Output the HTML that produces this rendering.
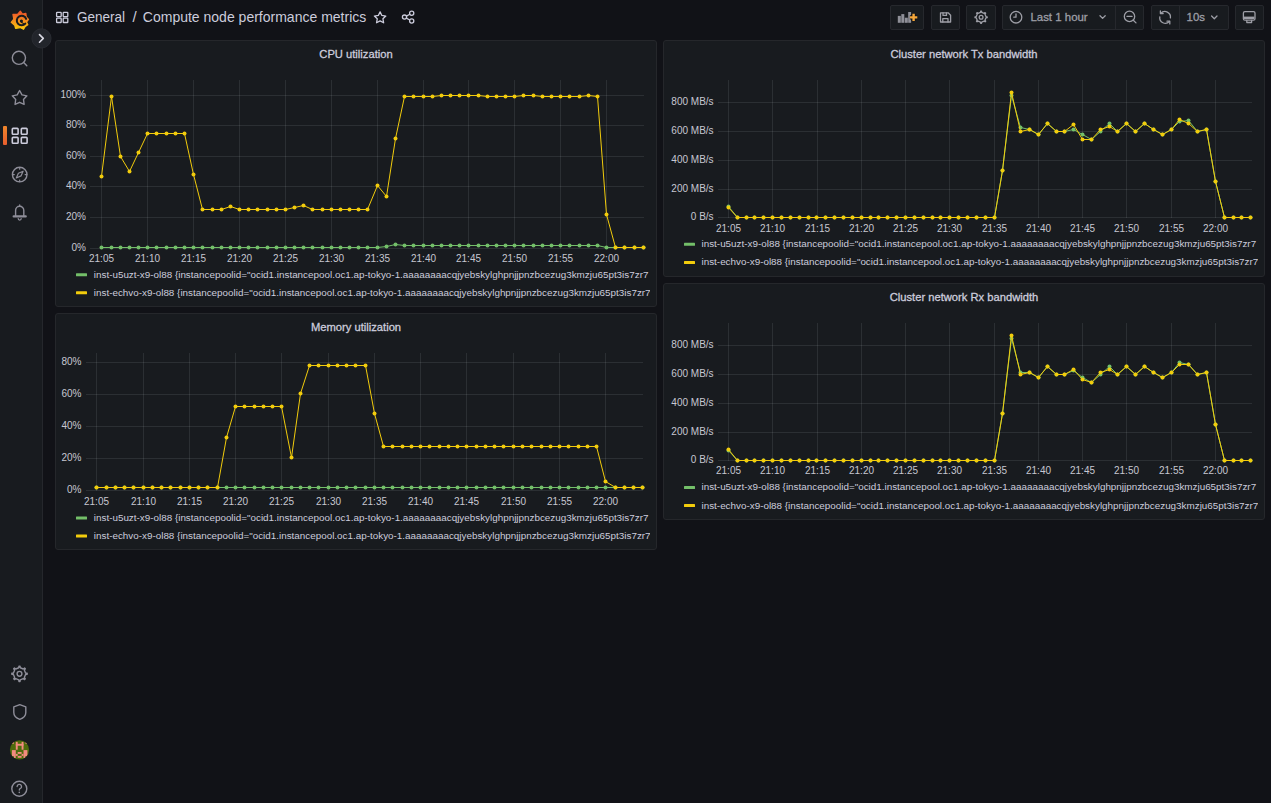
<!DOCTYPE html>
<html><head><meta charset="utf-8"><title>Compute node performance metrics - Grafana</title>
<style>
html,body{margin:0;padding:0;}
body{width:1271px;height:803px;overflow:hidden;background:#111217;position:relative;font-family:"Liberation Sans", sans-serif;color:#ccccdc;}
.side{position:absolute;left:0;top:0;width:42px;height:803px;background:#181b1f;border-right:1px solid #25272c;}
.panel{position:absolute;box-sizing:border-box;background:#181b1f;border:1px solid #25272b;border-radius:3px;}
.ov{position:absolute;left:0;top:0;}
.btn{position:absolute;top:5px;height:25px;box-sizing:border-box;background:#181b1f;border:1px solid #26282d;border-radius:2px;}
.tt{position:absolute;font-size:14px;color:#ccccdc;white-space:pre;line-height:1;}
</style></head><body>
<div class="side"></div>
<div class="panel" style="left:55px;top:40px;width:602px;height:267px"></div>
<div class="panel" style="left:55px;top:313px;width:602px;height:237px"></div>
<div class="panel" style="left:663px;top:40px;width:602px;height:237px"></div>
<div class="panel" style="left:663px;top:283px;width:602px;height:237px"></div>
<div class="btn" style="left:890px;width:34px"></div>
<div class="btn" style="left:931px;width:29px"></div>
<div class="btn" style="left:966px;width:30px"></div>
<div class="btn" style="left:1002px;width:142px"></div>
<div class="btn" style="left:1151px;width:78px"></div>
<div class="btn" style="left:1235px;width:29px"></div>
<svg class="ov" width="1271" height="803" viewBox="0 0 1271 803" style="font-family:"Liberation Sans", sans-serif"><defs>
<clipPath id="clipL1"><rect x="56" y="260" width="594" height="45"/></clipPath>
<clipPath id="clipL2"><rect x="56" y="505" width="594" height="45"/></clipPath>
<clipPath id="clipR1"><rect x="664" y="230" width="594" height="45"/></clipPath>
<clipPath id="clipR2"><rect x="664" y="473" width="594" height="45"/></clipPath>
</defs><rect x="90" y="248" width="554" height="1" fill="rgba(240,250,255,0.09)"/><text x="86.00" y="251.10" font-size="10" text-anchor="end" fill="#c7c7d1" font-weight="400" >0%</text><rect x="90" y="217" width="554" height="1" fill="rgba(240,250,255,0.09)"/><text x="86.00" y="220.10" font-size="10" text-anchor="end" fill="#c7c7d1" font-weight="400" >20%</text><rect x="90" y="186" width="554" height="1" fill="rgba(240,250,255,0.09)"/><text x="86.00" y="189.10" font-size="10" text-anchor="end" fill="#c7c7d1" font-weight="400" >40%</text><rect x="90" y="156" width="554" height="1" fill="rgba(240,250,255,0.09)"/><text x="86.00" y="159.10" font-size="10" text-anchor="end" fill="#c7c7d1" font-weight="400" >60%</text><rect x="90" y="125" width="554" height="1" fill="rgba(240,250,255,0.09)"/><text x="86.00" y="128.10" font-size="10" text-anchor="end" fill="#c7c7d1" font-weight="400" >80%</text><rect x="90" y="95" width="554" height="1" fill="rgba(240,250,255,0.09)"/><text x="86.00" y="98.10" font-size="10" text-anchor="end" fill="#c7c7d1" font-weight="400" >100%</text><rect x="101" y="80" width="1" height="169" fill="rgba(240,250,255,0.09)"/><text x="101.50" y="261.70" font-size="10" text-anchor="middle" fill="#c7c7d1" font-weight="400" >21:05</text><rect x="147" y="80" width="1" height="169" fill="rgba(240,250,255,0.09)"/><text x="147.50" y="261.70" font-size="10" text-anchor="middle" fill="#c7c7d1" font-weight="400" >21:10</text><rect x="193" y="80" width="1" height="169" fill="rgba(240,250,255,0.09)"/><text x="193.50" y="261.70" font-size="10" text-anchor="middle" fill="#c7c7d1" font-weight="400" >21:15</text><rect x="239" y="80" width="1" height="169" fill="rgba(240,250,255,0.09)"/><text x="239.50" y="261.70" font-size="10" text-anchor="middle" fill="#c7c7d1" font-weight="400" >21:20</text><rect x="285" y="80" width="1" height="169" fill="rgba(240,250,255,0.09)"/><text x="285.50" y="261.70" font-size="10" text-anchor="middle" fill="#c7c7d1" font-weight="400" >21:25</text><rect x="331" y="80" width="1" height="169" fill="rgba(240,250,255,0.09)"/><text x="331.50" y="261.70" font-size="10" text-anchor="middle" fill="#c7c7d1" font-weight="400" >21:30</text><rect x="377" y="80" width="1" height="169" fill="rgba(240,250,255,0.09)"/><text x="377.50" y="261.70" font-size="10" text-anchor="middle" fill="#c7c7d1" font-weight="400" >21:35</text><rect x="423" y="80" width="1" height="169" fill="rgba(240,250,255,0.09)"/><text x="423.50" y="261.70" font-size="10" text-anchor="middle" fill="#c7c7d1" font-weight="400" >21:40</text><rect x="468" y="80" width="1" height="169" fill="rgba(240,250,255,0.09)"/><text x="468.50" y="261.70" font-size="10" text-anchor="middle" fill="#c7c7d1" font-weight="400" >21:45</text><rect x="514" y="80" width="1" height="169" fill="rgba(240,250,255,0.09)"/><text x="514.50" y="261.70" font-size="10" text-anchor="middle" fill="#c7c7d1" font-weight="400" >21:50</text><rect x="560" y="80" width="1" height="169" fill="rgba(240,250,255,0.09)"/><text x="560.50" y="261.70" font-size="10" text-anchor="middle" fill="#c7c7d1" font-weight="400" >21:55</text><rect x="606" y="80" width="1" height="169" fill="rgba(240,250,255,0.09)"/><text x="606.50" y="261.70" font-size="10" text-anchor="middle" fill="#c7c7d1" font-weight="400" >22:00</text><path d="M101.5,247.5 L111.5,247.5 L120.5,247.5 L129.5,247.5 L138.5,247.5 L147.5,247.5 L156.5,247.5 L166.5,247.5 L175.5,247.5 L184.5,247.5 L193.5,247.5 L202.5,247.5 L212.5,247.5 L221.5,247.5 L230.5,247.5 L239.5,247.5 L248.5,247.5 L257.5,247.5 L267.5,247.5 L276.5,247.5 L285.5,247.5 L294.5,247.5 L303.5,247.5 L312.5,247.5 L322.5,247.5 L331.5,247.5 L340.5,247.5 L349.5,247.5 L358.5,247.5 L367.5,247.5 L377.5,247.5 L386.5,246.5 L395.5,244.5 L404.5,245.5 L413.5,245.5 L423.5,245.5 L432.5,245.5 L441.5,245.5 L450.5,245.5 L459.5,245.5 L468.5,245.5 L478.5,245.5 L487.5,245.5 L496.5,245.5 L505.5,245.5 L514.5,245.5 L523.5,245.5 L533.5,245.5 L542.5,245.5 L551.5,245.5 L560.5,245.5 L569.5,245.5 L579.5,245.5 L588.5,245.5 L597.5,245.5 L606.5,247.5 L615.5,247.5 L624.5,247.5 L634.5,247.5 L643.5,247.5" fill="none" stroke="#73bf69" stroke-width="1" stroke-linejoin="round"/><circle cx="101.5" cy="247.5" r="2.0" fill="#73bf69"/><circle cx="111.5" cy="247.5" r="2.0" fill="#73bf69"/><circle cx="120.5" cy="247.5" r="2.0" fill="#73bf69"/><circle cx="129.5" cy="247.5" r="2.0" fill="#73bf69"/><circle cx="138.5" cy="247.5" r="2.0" fill="#73bf69"/><circle cx="147.5" cy="247.5" r="2.0" fill="#73bf69"/><circle cx="156.5" cy="247.5" r="2.0" fill="#73bf69"/><circle cx="166.5" cy="247.5" r="2.0" fill="#73bf69"/><circle cx="175.5" cy="247.5" r="2.0" fill="#73bf69"/><circle cx="184.5" cy="247.5" r="2.0" fill="#73bf69"/><circle cx="193.5" cy="247.5" r="2.0" fill="#73bf69"/><circle cx="202.5" cy="247.5" r="2.0" fill="#73bf69"/><circle cx="212.5" cy="247.5" r="2.0" fill="#73bf69"/><circle cx="221.5" cy="247.5" r="2.0" fill="#73bf69"/><circle cx="230.5" cy="247.5" r="2.0" fill="#73bf69"/><circle cx="239.5" cy="247.5" r="2.0" fill="#73bf69"/><circle cx="248.5" cy="247.5" r="2.0" fill="#73bf69"/><circle cx="257.5" cy="247.5" r="2.0" fill="#73bf69"/><circle cx="267.5" cy="247.5" r="2.0" fill="#73bf69"/><circle cx="276.5" cy="247.5" r="2.0" fill="#73bf69"/><circle cx="285.5" cy="247.5" r="2.0" fill="#73bf69"/><circle cx="294.5" cy="247.5" r="2.0" fill="#73bf69"/><circle cx="303.5" cy="247.5" r="2.0" fill="#73bf69"/><circle cx="312.5" cy="247.5" r="2.0" fill="#73bf69"/><circle cx="322.5" cy="247.5" r="2.0" fill="#73bf69"/><circle cx="331.5" cy="247.5" r="2.0" fill="#73bf69"/><circle cx="340.5" cy="247.5" r="2.0" fill="#73bf69"/><circle cx="349.5" cy="247.5" r="2.0" fill="#73bf69"/><circle cx="358.5" cy="247.5" r="2.0" fill="#73bf69"/><circle cx="367.5" cy="247.5" r="2.0" fill="#73bf69"/><circle cx="377.5" cy="247.5" r="2.0" fill="#73bf69"/><circle cx="386.5" cy="246.5" r="2.0" fill="#73bf69"/><circle cx="395.5" cy="244.5" r="2.0" fill="#73bf69"/><circle cx="404.5" cy="245.5" r="2.0" fill="#73bf69"/><circle cx="413.5" cy="245.5" r="2.0" fill="#73bf69"/><circle cx="423.5" cy="245.5" r="2.0" fill="#73bf69"/><circle cx="432.5" cy="245.5" r="2.0" fill="#73bf69"/><circle cx="441.5" cy="245.5" r="2.0" fill="#73bf69"/><circle cx="450.5" cy="245.5" r="2.0" fill="#73bf69"/><circle cx="459.5" cy="245.5" r="2.0" fill="#73bf69"/><circle cx="468.5" cy="245.5" r="2.0" fill="#73bf69"/><circle cx="478.5" cy="245.5" r="2.0" fill="#73bf69"/><circle cx="487.5" cy="245.5" r="2.0" fill="#73bf69"/><circle cx="496.5" cy="245.5" r="2.0" fill="#73bf69"/><circle cx="505.5" cy="245.5" r="2.0" fill="#73bf69"/><circle cx="514.5" cy="245.5" r="2.0" fill="#73bf69"/><circle cx="523.5" cy="245.5" r="2.0" fill="#73bf69"/><circle cx="533.5" cy="245.5" r="2.0" fill="#73bf69"/><circle cx="542.5" cy="245.5" r="2.0" fill="#73bf69"/><circle cx="551.5" cy="245.5" r="2.0" fill="#73bf69"/><circle cx="560.5" cy="245.5" r="2.0" fill="#73bf69"/><circle cx="569.5" cy="245.5" r="2.0" fill="#73bf69"/><circle cx="579.5" cy="245.5" r="2.0" fill="#73bf69"/><circle cx="588.5" cy="245.5" r="2.0" fill="#73bf69"/><circle cx="597.5" cy="245.5" r="2.0" fill="#73bf69"/><circle cx="606.5" cy="247.5" r="2.0" fill="#73bf69"/><circle cx="615.5" cy="247.5" r="2.0" fill="#73bf69"/><circle cx="624.5" cy="247.5" r="2.0" fill="#73bf69"/><circle cx="634.5" cy="247.5" r="2.0" fill="#73bf69"/><circle cx="643.5" cy="247.5" r="2.0" fill="#73bf69"/><path d="M101.5,176.5 L111.5,96.5 L120.5,156.5 L129.5,171.5 L138.5,152.5 L147.5,133.5 L156.5,133.5 L166.5,133.5 L175.5,133.5 L184.5,133.5 L193.5,174.5 L202.5,209.5 L212.5,209.5 L221.5,209.5 L230.5,206.5 L239.5,209.5 L248.5,209.5 L257.5,209.5 L267.5,209.5 L276.5,209.5 L285.5,209.5 L294.5,207.5 L303.5,205.5 L312.5,209.5 L322.5,209.5 L331.5,209.5 L340.5,209.5 L349.5,209.5 L358.5,209.5 L367.5,209.5 L377.5,185.5 L386.5,196.5 L395.5,138.5 L404.5,96.5 L413.5,96.5 L423.5,96.5 L432.5,96.5 L441.5,95.5 L450.5,95.5 L459.5,95.5 L468.5,95.5 L478.5,95.5 L487.5,96.5 L496.5,96.5 L505.5,96.5 L514.5,96.5 L523.5,95.5 L533.5,95.5 L542.5,96.5 L551.5,96.5 L560.5,96.5 L569.5,96.5 L579.5,96.5 L588.5,95.5 L597.5,96.5 L606.5,214.5 L615.5,247.5 L624.5,247.5 L634.5,247.5 L643.5,247.5" fill="none" stroke="#f2cc0c" stroke-width="1" stroke-linejoin="round"/><circle cx="101.5" cy="176.5" r="2.0" fill="#f2cc0c"/><circle cx="111.5" cy="96.5" r="2.0" fill="#f2cc0c"/><circle cx="120.5" cy="156.5" r="2.0" fill="#f2cc0c"/><circle cx="129.5" cy="171.5" r="2.0" fill="#f2cc0c"/><circle cx="138.5" cy="152.5" r="2.0" fill="#f2cc0c"/><circle cx="147.5" cy="133.5" r="2.0" fill="#f2cc0c"/><circle cx="156.5" cy="133.5" r="2.0" fill="#f2cc0c"/><circle cx="166.5" cy="133.5" r="2.0" fill="#f2cc0c"/><circle cx="175.5" cy="133.5" r="2.0" fill="#f2cc0c"/><circle cx="184.5" cy="133.5" r="2.0" fill="#f2cc0c"/><circle cx="193.5" cy="174.5" r="2.0" fill="#f2cc0c"/><circle cx="202.5" cy="209.5" r="2.0" fill="#f2cc0c"/><circle cx="212.5" cy="209.5" r="2.0" fill="#f2cc0c"/><circle cx="221.5" cy="209.5" r="2.0" fill="#f2cc0c"/><circle cx="230.5" cy="206.5" r="2.0" fill="#f2cc0c"/><circle cx="239.5" cy="209.5" r="2.0" fill="#f2cc0c"/><circle cx="248.5" cy="209.5" r="2.0" fill="#f2cc0c"/><circle cx="257.5" cy="209.5" r="2.0" fill="#f2cc0c"/><circle cx="267.5" cy="209.5" r="2.0" fill="#f2cc0c"/><circle cx="276.5" cy="209.5" r="2.0" fill="#f2cc0c"/><circle cx="285.5" cy="209.5" r="2.0" fill="#f2cc0c"/><circle cx="294.5" cy="207.5" r="2.0" fill="#f2cc0c"/><circle cx="303.5" cy="205.5" r="2.0" fill="#f2cc0c"/><circle cx="312.5" cy="209.5" r="2.0" fill="#f2cc0c"/><circle cx="322.5" cy="209.5" r="2.0" fill="#f2cc0c"/><circle cx="331.5" cy="209.5" r="2.0" fill="#f2cc0c"/><circle cx="340.5" cy="209.5" r="2.0" fill="#f2cc0c"/><circle cx="349.5" cy="209.5" r="2.0" fill="#f2cc0c"/><circle cx="358.5" cy="209.5" r="2.0" fill="#f2cc0c"/><circle cx="367.5" cy="209.5" r="2.0" fill="#f2cc0c"/><circle cx="377.5" cy="185.5" r="2.0" fill="#f2cc0c"/><circle cx="386.5" cy="196.5" r="2.0" fill="#f2cc0c"/><circle cx="395.5" cy="138.5" r="2.0" fill="#f2cc0c"/><circle cx="404.5" cy="96.5" r="2.0" fill="#f2cc0c"/><circle cx="413.5" cy="96.5" r="2.0" fill="#f2cc0c"/><circle cx="423.5" cy="96.5" r="2.0" fill="#f2cc0c"/><circle cx="432.5" cy="96.5" r="2.0" fill="#f2cc0c"/><circle cx="441.5" cy="95.5" r="2.0" fill="#f2cc0c"/><circle cx="450.5" cy="95.5" r="2.0" fill="#f2cc0c"/><circle cx="459.5" cy="95.5" r="2.0" fill="#f2cc0c"/><circle cx="468.5" cy="95.5" r="2.0" fill="#f2cc0c"/><circle cx="478.5" cy="95.5" r="2.0" fill="#f2cc0c"/><circle cx="487.5" cy="96.5" r="2.0" fill="#f2cc0c"/><circle cx="496.5" cy="96.5" r="2.0" fill="#f2cc0c"/><circle cx="505.5" cy="96.5" r="2.0" fill="#f2cc0c"/><circle cx="514.5" cy="96.5" r="2.0" fill="#f2cc0c"/><circle cx="523.5" cy="95.5" r="2.0" fill="#f2cc0c"/><circle cx="533.5" cy="95.5" r="2.0" fill="#f2cc0c"/><circle cx="542.5" cy="96.5" r="2.0" fill="#f2cc0c"/><circle cx="551.5" cy="96.5" r="2.0" fill="#f2cc0c"/><circle cx="560.5" cy="96.5" r="2.0" fill="#f2cc0c"/><circle cx="569.5" cy="96.5" r="2.0" fill="#f2cc0c"/><circle cx="579.5" cy="96.5" r="2.0" fill="#f2cc0c"/><circle cx="588.5" cy="95.5" r="2.0" fill="#f2cc0c"/><circle cx="597.5" cy="96.5" r="2.0" fill="#f2cc0c"/><circle cx="606.5" cy="214.5" r="2.0" fill="#f2cc0c"/><circle cx="615.5" cy="247.5" r="2.0" fill="#f2cc0c"/><circle cx="624.5" cy="247.5" r="2.0" fill="#f2cc0c"/><circle cx="634.5" cy="247.5" r="2.0" fill="#f2cc0c"/><circle cx="643.5" cy="247.5" r="2.0" fill="#f2cc0c"/><rect x="86" y="490" width="557" height="1" fill="rgba(240,250,255,0.09)"/><text x="81.50" y="493.10" font-size="10" text-anchor="end" fill="#c7c7d1" font-weight="400" >0%</text><rect x="86" y="458" width="557" height="1" fill="rgba(240,250,255,0.09)"/><text x="81.50" y="461.10" font-size="10" text-anchor="end" fill="#c7c7d1" font-weight="400" >20%</text><rect x="86" y="426" width="557" height="1" fill="rgba(240,250,255,0.09)"/><text x="81.50" y="429.10" font-size="10" text-anchor="end" fill="#c7c7d1" font-weight="400" >40%</text><rect x="86" y="394" width="557" height="1" fill="rgba(240,250,255,0.09)"/><text x="81.50" y="397.10" font-size="10" text-anchor="end" fill="#c7c7d1" font-weight="400" >60%</text><rect x="86" y="362" width="557" height="1" fill="rgba(240,250,255,0.09)"/><text x="81.50" y="365.10" font-size="10" text-anchor="end" fill="#c7c7d1" font-weight="400" >80%</text><rect x="96" y="353" width="1" height="138" fill="rgba(240,250,255,0.09)"/><text x="96.50" y="505.00" font-size="10" text-anchor="middle" fill="#c7c7d1" font-weight="400" >21:05</text><rect x="143" y="353" width="1" height="138" fill="rgba(240,250,255,0.09)"/><text x="143.50" y="505.00" font-size="10" text-anchor="middle" fill="#c7c7d1" font-weight="400" >21:10</text><rect x="189" y="353" width="1" height="138" fill="rgba(240,250,255,0.09)"/><text x="189.50" y="505.00" font-size="10" text-anchor="middle" fill="#c7c7d1" font-weight="400" >21:15</text><rect x="235" y="353" width="1" height="138" fill="rgba(240,250,255,0.09)"/><text x="235.50" y="505.00" font-size="10" text-anchor="middle" fill="#c7c7d1" font-weight="400" >21:20</text><rect x="281" y="353" width="1" height="138" fill="rgba(240,250,255,0.09)"/><text x="281.50" y="505.00" font-size="10" text-anchor="middle" fill="#c7c7d1" font-weight="400" >21:25</text><rect x="328" y="353" width="1" height="138" fill="rgba(240,250,255,0.09)"/><text x="328.50" y="505.00" font-size="10" text-anchor="middle" fill="#c7c7d1" font-weight="400" >21:30</text><rect x="374" y="353" width="1" height="138" fill="rgba(240,250,255,0.09)"/><text x="374.50" y="505.00" font-size="10" text-anchor="middle" fill="#c7c7d1" font-weight="400" >21:35</text><rect x="420" y="353" width="1" height="138" fill="rgba(240,250,255,0.09)"/><text x="420.50" y="505.00" font-size="10" text-anchor="middle" fill="#c7c7d1" font-weight="400" >21:40</text><rect x="466" y="353" width="1" height="138" fill="rgba(240,250,255,0.09)"/><text x="466.50" y="505.00" font-size="10" text-anchor="middle" fill="#c7c7d1" font-weight="400" >21:45</text><rect x="513" y="353" width="1" height="138" fill="rgba(240,250,255,0.09)"/><text x="513.50" y="505.00" font-size="10" text-anchor="middle" fill="#c7c7d1" font-weight="400" >21:50</text><rect x="559" y="353" width="1" height="138" fill="rgba(240,250,255,0.09)"/><text x="559.50" y="505.00" font-size="10" text-anchor="middle" fill="#c7c7d1" font-weight="400" >21:55</text><rect x="605" y="353" width="1" height="138" fill="rgba(240,250,255,0.09)"/><text x="605.50" y="505.00" font-size="10" text-anchor="middle" fill="#c7c7d1" font-weight="400" >22:00</text><path d="M96.5,487.5 L106.5,487.5 L115.5,487.5 L124.5,487.5 L133.5,487.5 L143.5,487.5 L152.5,487.5 L161.5,487.5 L170.5,487.5 L180.5,487.5 L189.5,487.5 L198.5,487.5 L207.5,487.5 L217.5,487.5 L226.5,487.5 L235.5,487.5 L244.5,487.5 L254.5,487.5 L263.5,487.5 L272.5,487.5 L281.5,487.5 L291.5,487.5 L300.5,487.5 L309.5,487.5 L318.5,487.5 L328.5,487.5 L337.5,487.5 L346.5,487.5 L355.5,487.5 L365.5,487.5 L374.5,487.5 L383.5,487.5 L392.5,487.5 L402.5,487.5 L411.5,487.5 L420.5,487.5 L429.5,487.5 L439.5,487.5 L448.5,487.5 L457.5,487.5 L466.5,487.5 L476.5,487.5 L485.5,487.5 L494.5,487.5 L503.5,487.5 L513.5,487.5 L522.5,487.5 L531.5,487.5 L541.5,487.5 L550.5,487.5 L559.5,487.5 L568.5,487.5 L578.5,487.5 L587.5,487.5 L596.5,487.5 L605.5,487.5 L615.5,487.5 L624.5,487.5 L633.5,487.5 L642.5,487.5" fill="none" stroke="#73bf69" stroke-width="1" stroke-linejoin="round"/><circle cx="96.5" cy="487.5" r="2.0" fill="#73bf69"/><circle cx="106.5" cy="487.5" r="2.0" fill="#73bf69"/><circle cx="115.5" cy="487.5" r="2.0" fill="#73bf69"/><circle cx="124.5" cy="487.5" r="2.0" fill="#73bf69"/><circle cx="133.5" cy="487.5" r="2.0" fill="#73bf69"/><circle cx="143.5" cy="487.5" r="2.0" fill="#73bf69"/><circle cx="152.5" cy="487.5" r="2.0" fill="#73bf69"/><circle cx="161.5" cy="487.5" r="2.0" fill="#73bf69"/><circle cx="170.5" cy="487.5" r="2.0" fill="#73bf69"/><circle cx="180.5" cy="487.5" r="2.0" fill="#73bf69"/><circle cx="189.5" cy="487.5" r="2.0" fill="#73bf69"/><circle cx="198.5" cy="487.5" r="2.0" fill="#73bf69"/><circle cx="207.5" cy="487.5" r="2.0" fill="#73bf69"/><circle cx="217.5" cy="487.5" r="2.0" fill="#73bf69"/><circle cx="226.5" cy="487.5" r="2.0" fill="#73bf69"/><circle cx="235.5" cy="487.5" r="2.0" fill="#73bf69"/><circle cx="244.5" cy="487.5" r="2.0" fill="#73bf69"/><circle cx="254.5" cy="487.5" r="2.0" fill="#73bf69"/><circle cx="263.5" cy="487.5" r="2.0" fill="#73bf69"/><circle cx="272.5" cy="487.5" r="2.0" fill="#73bf69"/><circle cx="281.5" cy="487.5" r="2.0" fill="#73bf69"/><circle cx="291.5" cy="487.5" r="2.0" fill="#73bf69"/><circle cx="300.5" cy="487.5" r="2.0" fill="#73bf69"/><circle cx="309.5" cy="487.5" r="2.0" fill="#73bf69"/><circle cx="318.5" cy="487.5" r="2.0" fill="#73bf69"/><circle cx="328.5" cy="487.5" r="2.0" fill="#73bf69"/><circle cx="337.5" cy="487.5" r="2.0" fill="#73bf69"/><circle cx="346.5" cy="487.5" r="2.0" fill="#73bf69"/><circle cx="355.5" cy="487.5" r="2.0" fill="#73bf69"/><circle cx="365.5" cy="487.5" r="2.0" fill="#73bf69"/><circle cx="374.5" cy="487.5" r="2.0" fill="#73bf69"/><circle cx="383.5" cy="487.5" r="2.0" fill="#73bf69"/><circle cx="392.5" cy="487.5" r="2.0" fill="#73bf69"/><circle cx="402.5" cy="487.5" r="2.0" fill="#73bf69"/><circle cx="411.5" cy="487.5" r="2.0" fill="#73bf69"/><circle cx="420.5" cy="487.5" r="2.0" fill="#73bf69"/><circle cx="429.5" cy="487.5" r="2.0" fill="#73bf69"/><circle cx="439.5" cy="487.5" r="2.0" fill="#73bf69"/><circle cx="448.5" cy="487.5" r="2.0" fill="#73bf69"/><circle cx="457.5" cy="487.5" r="2.0" fill="#73bf69"/><circle cx="466.5" cy="487.5" r="2.0" fill="#73bf69"/><circle cx="476.5" cy="487.5" r="2.0" fill="#73bf69"/><circle cx="485.5" cy="487.5" r="2.0" fill="#73bf69"/><circle cx="494.5" cy="487.5" r="2.0" fill="#73bf69"/><circle cx="503.5" cy="487.5" r="2.0" fill="#73bf69"/><circle cx="513.5" cy="487.5" r="2.0" fill="#73bf69"/><circle cx="522.5" cy="487.5" r="2.0" fill="#73bf69"/><circle cx="531.5" cy="487.5" r="2.0" fill="#73bf69"/><circle cx="541.5" cy="487.5" r="2.0" fill="#73bf69"/><circle cx="550.5" cy="487.5" r="2.0" fill="#73bf69"/><circle cx="559.5" cy="487.5" r="2.0" fill="#73bf69"/><circle cx="568.5" cy="487.5" r="2.0" fill="#73bf69"/><circle cx="578.5" cy="487.5" r="2.0" fill="#73bf69"/><circle cx="587.5" cy="487.5" r="2.0" fill="#73bf69"/><circle cx="596.5" cy="487.5" r="2.0" fill="#73bf69"/><circle cx="605.5" cy="487.5" r="2.0" fill="#73bf69"/><circle cx="615.5" cy="487.5" r="2.0" fill="#73bf69"/><circle cx="624.5" cy="487.5" r="2.0" fill="#73bf69"/><circle cx="633.5" cy="487.5" r="2.0" fill="#73bf69"/><circle cx="642.5" cy="487.5" r="2.0" fill="#73bf69"/><path d="M96.5,487.5 L106.5,487.5 L115.5,487.5 L124.5,487.5 L133.5,487.5 L143.5,487.5 L152.5,487.5 L161.5,487.5 L170.5,487.5 L180.5,487.5 L189.5,487.5 L198.5,487.5 L207.5,487.5 L217.5,487.5 L226.5,437.5 L235.5,406.5 L244.5,406.5 L254.5,406.5 L263.5,406.5 L272.5,406.5 L281.5,406.5 L291.5,457.5 L300.5,393.5 L309.5,365.5 L318.5,365.5 L328.5,365.5 L337.5,365.5 L346.5,365.5 L355.5,365.5 L365.5,365.5 L374.5,413.5 L383.5,446.5 L392.5,446.5 L402.5,446.5 L411.5,446.5 L420.5,446.5 L429.5,446.5 L439.5,446.5 L448.5,446.5 L457.5,446.5 L466.5,446.5 L476.5,446.5 L485.5,446.5 L494.5,446.5 L503.5,446.5 L513.5,446.5 L522.5,446.5 L531.5,446.5 L541.5,446.5 L550.5,446.5 L559.5,446.5 L568.5,446.5 L578.5,446.5 L587.5,446.5 L596.5,446.5 L605.5,481.5 L615.5,487.5 L624.5,487.5 L633.5,487.5 L642.5,487.5" fill="none" stroke="#f2cc0c" stroke-width="1" stroke-linejoin="round"/><circle cx="96.5" cy="487.5" r="2.0" fill="#f2cc0c"/><circle cx="106.5" cy="487.5" r="2.0" fill="#f2cc0c"/><circle cx="115.5" cy="487.5" r="2.0" fill="#f2cc0c"/><circle cx="124.5" cy="487.5" r="2.0" fill="#f2cc0c"/><circle cx="133.5" cy="487.5" r="2.0" fill="#f2cc0c"/><circle cx="143.5" cy="487.5" r="2.0" fill="#f2cc0c"/><circle cx="152.5" cy="487.5" r="2.0" fill="#f2cc0c"/><circle cx="161.5" cy="487.5" r="2.0" fill="#f2cc0c"/><circle cx="170.5" cy="487.5" r="2.0" fill="#f2cc0c"/><circle cx="180.5" cy="487.5" r="2.0" fill="#f2cc0c"/><circle cx="189.5" cy="487.5" r="2.0" fill="#f2cc0c"/><circle cx="198.5" cy="487.5" r="2.0" fill="#f2cc0c"/><circle cx="207.5" cy="487.5" r="2.0" fill="#f2cc0c"/><circle cx="217.5" cy="487.5" r="2.0" fill="#f2cc0c"/><circle cx="226.5" cy="437.5" r="2.0" fill="#f2cc0c"/><circle cx="235.5" cy="406.5" r="2.0" fill="#f2cc0c"/><circle cx="244.5" cy="406.5" r="2.0" fill="#f2cc0c"/><circle cx="254.5" cy="406.5" r="2.0" fill="#f2cc0c"/><circle cx="263.5" cy="406.5" r="2.0" fill="#f2cc0c"/><circle cx="272.5" cy="406.5" r="2.0" fill="#f2cc0c"/><circle cx="281.5" cy="406.5" r="2.0" fill="#f2cc0c"/><circle cx="291.5" cy="457.5" r="2.0" fill="#f2cc0c"/><circle cx="300.5" cy="393.5" r="2.0" fill="#f2cc0c"/><circle cx="309.5" cy="365.5" r="2.0" fill="#f2cc0c"/><circle cx="318.5" cy="365.5" r="2.0" fill="#f2cc0c"/><circle cx="328.5" cy="365.5" r="2.0" fill="#f2cc0c"/><circle cx="337.5" cy="365.5" r="2.0" fill="#f2cc0c"/><circle cx="346.5" cy="365.5" r="2.0" fill="#f2cc0c"/><circle cx="355.5" cy="365.5" r="2.0" fill="#f2cc0c"/><circle cx="365.5" cy="365.5" r="2.0" fill="#f2cc0c"/><circle cx="374.5" cy="413.5" r="2.0" fill="#f2cc0c"/><circle cx="383.5" cy="446.5" r="2.0" fill="#f2cc0c"/><circle cx="392.5" cy="446.5" r="2.0" fill="#f2cc0c"/><circle cx="402.5" cy="446.5" r="2.0" fill="#f2cc0c"/><circle cx="411.5" cy="446.5" r="2.0" fill="#f2cc0c"/><circle cx="420.5" cy="446.5" r="2.0" fill="#f2cc0c"/><circle cx="429.5" cy="446.5" r="2.0" fill="#f2cc0c"/><circle cx="439.5" cy="446.5" r="2.0" fill="#f2cc0c"/><circle cx="448.5" cy="446.5" r="2.0" fill="#f2cc0c"/><circle cx="457.5" cy="446.5" r="2.0" fill="#f2cc0c"/><circle cx="466.5" cy="446.5" r="2.0" fill="#f2cc0c"/><circle cx="476.5" cy="446.5" r="2.0" fill="#f2cc0c"/><circle cx="485.5" cy="446.5" r="2.0" fill="#f2cc0c"/><circle cx="494.5" cy="446.5" r="2.0" fill="#f2cc0c"/><circle cx="503.5" cy="446.5" r="2.0" fill="#f2cc0c"/><circle cx="513.5" cy="446.5" r="2.0" fill="#f2cc0c"/><circle cx="522.5" cy="446.5" r="2.0" fill="#f2cc0c"/><circle cx="531.5" cy="446.5" r="2.0" fill="#f2cc0c"/><circle cx="541.5" cy="446.5" r="2.0" fill="#f2cc0c"/><circle cx="550.5" cy="446.5" r="2.0" fill="#f2cc0c"/><circle cx="559.5" cy="446.5" r="2.0" fill="#f2cc0c"/><circle cx="568.5" cy="446.5" r="2.0" fill="#f2cc0c"/><circle cx="578.5" cy="446.5" r="2.0" fill="#f2cc0c"/><circle cx="587.5" cy="446.5" r="2.0" fill="#f2cc0c"/><circle cx="596.5" cy="446.5" r="2.0" fill="#f2cc0c"/><circle cx="605.5" cy="481.5" r="2.0" fill="#f2cc0c"/><circle cx="615.5" cy="487.5" r="2.0" fill="#f2cc0c"/><circle cx="624.5" cy="487.5" r="2.0" fill="#f2cc0c"/><circle cx="633.5" cy="487.5" r="2.0" fill="#f2cc0c"/><circle cx="642.5" cy="487.5" r="2.0" fill="#f2cc0c"/><rect x="718" y="217" width="534" height="1" fill="rgba(240,250,255,0.09)"/><text x="713.60" y="220.10" font-size="10" text-anchor="end" fill="#c7c7d1" font-weight="400" >0 B/s</text><rect x="718" y="189" width="534" height="1" fill="rgba(240,250,255,0.09)"/><text x="713.60" y="192.10" font-size="10" text-anchor="end" fill="#c7c7d1" font-weight="400" >200 MB/s</text><rect x="718" y="160" width="534" height="1" fill="rgba(240,250,255,0.09)"/><text x="713.60" y="163.10" font-size="10" text-anchor="end" fill="#c7c7d1" font-weight="400" >400 MB/s</text><rect x="718" y="131" width="534" height="1" fill="rgba(240,250,255,0.09)"/><text x="713.60" y="134.10" font-size="10" text-anchor="end" fill="#c7c7d1" font-weight="400" >600 MB/s</text><rect x="718" y="102" width="534" height="1" fill="rgba(240,250,255,0.09)"/><text x="713.60" y="105.10" font-size="10" text-anchor="end" fill="#c7c7d1" font-weight="400" >800 MB/s</text><rect x="728" y="80" width="1" height="138" fill="rgba(240,250,255,0.09)"/><text x="728.50" y="231.50" font-size="10" text-anchor="middle" fill="#c7c7d1" font-weight="400" >21:05</text><rect x="772" y="80" width="1" height="138" fill="rgba(240,250,255,0.09)"/><text x="772.50" y="231.50" font-size="10" text-anchor="middle" fill="#c7c7d1" font-weight="400" >21:10</text><rect x="817" y="80" width="1" height="138" fill="rgba(240,250,255,0.09)"/><text x="817.50" y="231.50" font-size="10" text-anchor="middle" fill="#c7c7d1" font-weight="400" >21:15</text><rect x="861" y="80" width="1" height="138" fill="rgba(240,250,255,0.09)"/><text x="861.50" y="231.50" font-size="10" text-anchor="middle" fill="#c7c7d1" font-weight="400" >21:20</text><rect x="905" y="80" width="1" height="138" fill="rgba(240,250,255,0.09)"/><text x="905.50" y="231.50" font-size="10" text-anchor="middle" fill="#c7c7d1" font-weight="400" >21:25</text><rect x="949" y="80" width="1" height="138" fill="rgba(240,250,255,0.09)"/><text x="949.50" y="231.50" font-size="10" text-anchor="middle" fill="#c7c7d1" font-weight="400" >21:30</text><rect x="994" y="80" width="1" height="138" fill="rgba(240,250,255,0.09)"/><text x="994.50" y="231.50" font-size="10" text-anchor="middle" fill="#c7c7d1" font-weight="400" >21:35</text><rect x="1038" y="80" width="1" height="138" fill="rgba(240,250,255,0.09)"/><text x="1038.50" y="231.50" font-size="10" text-anchor="middle" fill="#c7c7d1" font-weight="400" >21:40</text><rect x="1082" y="80" width="1" height="138" fill="rgba(240,250,255,0.09)"/><text x="1082.50" y="231.50" font-size="10" text-anchor="middle" fill="#c7c7d1" font-weight="400" >21:45</text><rect x="1126" y="80" width="1" height="138" fill="rgba(240,250,255,0.09)"/><text x="1126.50" y="231.50" font-size="10" text-anchor="middle" fill="#c7c7d1" font-weight="400" >21:50</text><rect x="1171" y="80" width="1" height="138" fill="rgba(240,250,255,0.09)"/><text x="1171.50" y="231.50" font-size="10" text-anchor="middle" fill="#c7c7d1" font-weight="400" >21:55</text><rect x="1215" y="80" width="1" height="138" fill="rgba(240,250,255,0.09)"/><text x="1215.50" y="231.50" font-size="10" text-anchor="middle" fill="#c7c7d1" font-weight="400" >22:00</text><path d="M728.5,206.5 L737.5,217.5 L746.5,217.5 L754.5,217.5 L763.5,217.5 L772.5,217.5 L781.5,217.5 L790.5,217.5 L799.5,217.5 L808.5,217.5 L816.5,217.5 L825.5,217.5 L834.5,217.5 L843.5,217.5 L852.5,217.5 L861.5,217.5 L870.5,217.5 L878.5,217.5 L887.5,217.5 L896.5,217.5 L905.5,217.5 L914.5,217.5 L923.5,217.5 L932.5,217.5 L940.5,217.5 L949.5,217.5 L958.5,217.5 L967.5,217.5 L976.5,217.5 L985.5,217.5 L994.5,217.5 L1002.5,170.5 L1011.5,95.5 L1020.5,127.5 L1029.5,129.5 L1038.5,134.5 L1047.5,123.5 L1056.5,131.5 L1064.5,131.5 L1073.5,129.5 L1082.5,134.5 L1091.5,139.5 L1100.5,131.5 L1109.5,123.5 L1117.5,131.5 L1126.5,123.5 L1135.5,131.5 L1144.5,123.5 L1153.5,129.5 L1162.5,134.5 L1171.5,129.5 L1179.5,121.5 L1188.5,120.5 L1197.5,131.5 L1206.5,129.5 L1215.5,181.5 L1224.5,217.5 L1233.5,217.5 L1241.5,217.5 L1250.5,217.5" fill="none" stroke="#73bf69" stroke-width="1" stroke-linejoin="round"/><circle cx="728.5" cy="206.5" r="2.0" fill="#73bf69"/><circle cx="737.5" cy="217.5" r="2.0" fill="#73bf69"/><circle cx="746.5" cy="217.5" r="2.0" fill="#73bf69"/><circle cx="754.5" cy="217.5" r="2.0" fill="#73bf69"/><circle cx="763.5" cy="217.5" r="2.0" fill="#73bf69"/><circle cx="772.5" cy="217.5" r="2.0" fill="#73bf69"/><circle cx="781.5" cy="217.5" r="2.0" fill="#73bf69"/><circle cx="790.5" cy="217.5" r="2.0" fill="#73bf69"/><circle cx="799.5" cy="217.5" r="2.0" fill="#73bf69"/><circle cx="808.5" cy="217.5" r="2.0" fill="#73bf69"/><circle cx="816.5" cy="217.5" r="2.0" fill="#73bf69"/><circle cx="825.5" cy="217.5" r="2.0" fill="#73bf69"/><circle cx="834.5" cy="217.5" r="2.0" fill="#73bf69"/><circle cx="843.5" cy="217.5" r="2.0" fill="#73bf69"/><circle cx="852.5" cy="217.5" r="2.0" fill="#73bf69"/><circle cx="861.5" cy="217.5" r="2.0" fill="#73bf69"/><circle cx="870.5" cy="217.5" r="2.0" fill="#73bf69"/><circle cx="878.5" cy="217.5" r="2.0" fill="#73bf69"/><circle cx="887.5" cy="217.5" r="2.0" fill="#73bf69"/><circle cx="896.5" cy="217.5" r="2.0" fill="#73bf69"/><circle cx="905.5" cy="217.5" r="2.0" fill="#73bf69"/><circle cx="914.5" cy="217.5" r="2.0" fill="#73bf69"/><circle cx="923.5" cy="217.5" r="2.0" fill="#73bf69"/><circle cx="932.5" cy="217.5" r="2.0" fill="#73bf69"/><circle cx="940.5" cy="217.5" r="2.0" fill="#73bf69"/><circle cx="949.5" cy="217.5" r="2.0" fill="#73bf69"/><circle cx="958.5" cy="217.5" r="2.0" fill="#73bf69"/><circle cx="967.5" cy="217.5" r="2.0" fill="#73bf69"/><circle cx="976.5" cy="217.5" r="2.0" fill="#73bf69"/><circle cx="985.5" cy="217.5" r="2.0" fill="#73bf69"/><circle cx="994.5" cy="217.5" r="2.0" fill="#73bf69"/><circle cx="1002.5" cy="170.5" r="2.0" fill="#73bf69"/><circle cx="1011.5" cy="95.5" r="2.0" fill="#73bf69"/><circle cx="1020.5" cy="127.5" r="2.0" fill="#73bf69"/><circle cx="1029.5" cy="129.5" r="2.0" fill="#73bf69"/><circle cx="1038.5" cy="134.5" r="2.0" fill="#73bf69"/><circle cx="1047.5" cy="123.5" r="2.0" fill="#73bf69"/><circle cx="1056.5" cy="131.5" r="2.0" fill="#73bf69"/><circle cx="1064.5" cy="131.5" r="2.0" fill="#73bf69"/><circle cx="1073.5" cy="129.5" r="2.0" fill="#73bf69"/><circle cx="1082.5" cy="134.5" r="2.0" fill="#73bf69"/><circle cx="1091.5" cy="139.5" r="2.0" fill="#73bf69"/><circle cx="1100.5" cy="131.5" r="2.0" fill="#73bf69"/><circle cx="1109.5" cy="123.5" r="2.0" fill="#73bf69"/><circle cx="1117.5" cy="131.5" r="2.0" fill="#73bf69"/><circle cx="1126.5" cy="123.5" r="2.0" fill="#73bf69"/><circle cx="1135.5" cy="131.5" r="2.0" fill="#73bf69"/><circle cx="1144.5" cy="123.5" r="2.0" fill="#73bf69"/><circle cx="1153.5" cy="129.5" r="2.0" fill="#73bf69"/><circle cx="1162.5" cy="134.5" r="2.0" fill="#73bf69"/><circle cx="1171.5" cy="129.5" r="2.0" fill="#73bf69"/><circle cx="1179.5" cy="121.5" r="2.0" fill="#73bf69"/><circle cx="1188.5" cy="120.5" r="2.0" fill="#73bf69"/><circle cx="1197.5" cy="131.5" r="2.0" fill="#73bf69"/><circle cx="1206.5" cy="129.5" r="2.0" fill="#73bf69"/><circle cx="1215.5" cy="181.5" r="2.0" fill="#73bf69"/><circle cx="1224.5" cy="217.5" r="2.0" fill="#73bf69"/><circle cx="1233.5" cy="217.5" r="2.0" fill="#73bf69"/><circle cx="1241.5" cy="217.5" r="2.0" fill="#73bf69"/><circle cx="1250.5" cy="217.5" r="2.0" fill="#73bf69"/><path d="M728.5,207.5 L737.5,217.5 L746.5,217.5 L754.5,217.5 L763.5,217.5 L772.5,217.5 L781.5,217.5 L790.5,217.5 L799.5,217.5 L808.5,217.5 L816.5,217.5 L825.5,217.5 L834.5,217.5 L843.5,217.5 L852.5,217.5 L861.5,217.5 L870.5,217.5 L878.5,217.5 L887.5,217.5 L896.5,217.5 L905.5,217.5 L914.5,217.5 L923.5,217.5 L932.5,217.5 L940.5,217.5 L949.5,217.5 L958.5,217.5 L967.5,217.5 L976.5,217.5 L985.5,217.5 L994.5,217.5 L1002.5,170.5 L1011.5,92.5 L1020.5,131.5 L1029.5,129.5 L1038.5,134.5 L1047.5,123.5 L1056.5,131.5 L1064.5,131.5 L1073.5,124.5 L1082.5,139.5 L1091.5,139.5 L1100.5,129.5 L1109.5,126.5 L1117.5,131.5 L1126.5,123.5 L1135.5,131.5 L1144.5,123.5 L1153.5,129.5 L1162.5,134.5 L1171.5,129.5 L1179.5,119.5 L1188.5,123.5 L1197.5,131.5 L1206.5,129.5 L1215.5,181.5 L1224.5,217.5 L1233.5,217.5 L1241.5,217.5 L1250.5,217.5" fill="none" stroke="#f2cc0c" stroke-width="1" stroke-linejoin="round"/><circle cx="728.5" cy="207.5" r="2.0" fill="#f2cc0c"/><circle cx="737.5" cy="217.5" r="2.0" fill="#f2cc0c"/><circle cx="746.5" cy="217.5" r="2.0" fill="#f2cc0c"/><circle cx="754.5" cy="217.5" r="2.0" fill="#f2cc0c"/><circle cx="763.5" cy="217.5" r="2.0" fill="#f2cc0c"/><circle cx="772.5" cy="217.5" r="2.0" fill="#f2cc0c"/><circle cx="781.5" cy="217.5" r="2.0" fill="#f2cc0c"/><circle cx="790.5" cy="217.5" r="2.0" fill="#f2cc0c"/><circle cx="799.5" cy="217.5" r="2.0" fill="#f2cc0c"/><circle cx="808.5" cy="217.5" r="2.0" fill="#f2cc0c"/><circle cx="816.5" cy="217.5" r="2.0" fill="#f2cc0c"/><circle cx="825.5" cy="217.5" r="2.0" fill="#f2cc0c"/><circle cx="834.5" cy="217.5" r="2.0" fill="#f2cc0c"/><circle cx="843.5" cy="217.5" r="2.0" fill="#f2cc0c"/><circle cx="852.5" cy="217.5" r="2.0" fill="#f2cc0c"/><circle cx="861.5" cy="217.5" r="2.0" fill="#f2cc0c"/><circle cx="870.5" cy="217.5" r="2.0" fill="#f2cc0c"/><circle cx="878.5" cy="217.5" r="2.0" fill="#f2cc0c"/><circle cx="887.5" cy="217.5" r="2.0" fill="#f2cc0c"/><circle cx="896.5" cy="217.5" r="2.0" fill="#f2cc0c"/><circle cx="905.5" cy="217.5" r="2.0" fill="#f2cc0c"/><circle cx="914.5" cy="217.5" r="2.0" fill="#f2cc0c"/><circle cx="923.5" cy="217.5" r="2.0" fill="#f2cc0c"/><circle cx="932.5" cy="217.5" r="2.0" fill="#f2cc0c"/><circle cx="940.5" cy="217.5" r="2.0" fill="#f2cc0c"/><circle cx="949.5" cy="217.5" r="2.0" fill="#f2cc0c"/><circle cx="958.5" cy="217.5" r="2.0" fill="#f2cc0c"/><circle cx="967.5" cy="217.5" r="2.0" fill="#f2cc0c"/><circle cx="976.5" cy="217.5" r="2.0" fill="#f2cc0c"/><circle cx="985.5" cy="217.5" r="2.0" fill="#f2cc0c"/><circle cx="994.5" cy="217.5" r="2.0" fill="#f2cc0c"/><circle cx="1002.5" cy="170.5" r="2.0" fill="#f2cc0c"/><circle cx="1011.5" cy="92.5" r="2.0" fill="#f2cc0c"/><circle cx="1020.5" cy="131.5" r="2.0" fill="#f2cc0c"/><circle cx="1029.5" cy="129.5" r="2.0" fill="#f2cc0c"/><circle cx="1038.5" cy="134.5" r="2.0" fill="#f2cc0c"/><circle cx="1047.5" cy="123.5" r="2.0" fill="#f2cc0c"/><circle cx="1056.5" cy="131.5" r="2.0" fill="#f2cc0c"/><circle cx="1064.5" cy="131.5" r="2.0" fill="#f2cc0c"/><circle cx="1073.5" cy="124.5" r="2.0" fill="#f2cc0c"/><circle cx="1082.5" cy="139.5" r="2.0" fill="#f2cc0c"/><circle cx="1091.5" cy="139.5" r="2.0" fill="#f2cc0c"/><circle cx="1100.5" cy="129.5" r="2.0" fill="#f2cc0c"/><circle cx="1109.5" cy="126.5" r="2.0" fill="#f2cc0c"/><circle cx="1117.5" cy="131.5" r="2.0" fill="#f2cc0c"/><circle cx="1126.5" cy="123.5" r="2.0" fill="#f2cc0c"/><circle cx="1135.5" cy="131.5" r="2.0" fill="#f2cc0c"/><circle cx="1144.5" cy="123.5" r="2.0" fill="#f2cc0c"/><circle cx="1153.5" cy="129.5" r="2.0" fill="#f2cc0c"/><circle cx="1162.5" cy="134.5" r="2.0" fill="#f2cc0c"/><circle cx="1171.5" cy="129.5" r="2.0" fill="#f2cc0c"/><circle cx="1179.5" cy="119.5" r="2.0" fill="#f2cc0c"/><circle cx="1188.5" cy="123.5" r="2.0" fill="#f2cc0c"/><circle cx="1197.5" cy="131.5" r="2.0" fill="#f2cc0c"/><circle cx="1206.5" cy="129.5" r="2.0" fill="#f2cc0c"/><circle cx="1215.5" cy="181.5" r="2.0" fill="#f2cc0c"/><circle cx="1224.5" cy="217.5" r="2.0" fill="#f2cc0c"/><circle cx="1233.5" cy="217.5" r="2.0" fill="#f2cc0c"/><circle cx="1241.5" cy="217.5" r="2.0" fill="#f2cc0c"/><circle cx="1250.5" cy="217.5" r="2.0" fill="#f2cc0c"/><rect x="718" y="460" width="534" height="1" fill="rgba(240,250,255,0.09)"/><text x="713.60" y="463.10" font-size="10" text-anchor="end" fill="#c7c7d1" font-weight="400" >0 B/s</text><rect x="718" y="432" width="534" height="1" fill="rgba(240,250,255,0.09)"/><text x="713.60" y="435.10" font-size="10" text-anchor="end" fill="#c7c7d1" font-weight="400" >200 MB/s</text><rect x="718" y="403" width="534" height="1" fill="rgba(240,250,255,0.09)"/><text x="713.60" y="406.10" font-size="10" text-anchor="end" fill="#c7c7d1" font-weight="400" >400 MB/s</text><rect x="718" y="374" width="534" height="1" fill="rgba(240,250,255,0.09)"/><text x="713.60" y="377.10" font-size="10" text-anchor="end" fill="#c7c7d1" font-weight="400" >600 MB/s</text><rect x="718" y="345" width="534" height="1" fill="rgba(240,250,255,0.09)"/><text x="713.60" y="348.10" font-size="10" text-anchor="end" fill="#c7c7d1" font-weight="400" >800 MB/s</text><rect x="728" y="323" width="1" height="138" fill="rgba(240,250,255,0.09)"/><text x="728.50" y="474.30" font-size="10" text-anchor="middle" fill="#c7c7d1" font-weight="400" >21:05</text><rect x="772" y="323" width="1" height="138" fill="rgba(240,250,255,0.09)"/><text x="772.50" y="474.30" font-size="10" text-anchor="middle" fill="#c7c7d1" font-weight="400" >21:10</text><rect x="817" y="323" width="1" height="138" fill="rgba(240,250,255,0.09)"/><text x="817.50" y="474.30" font-size="10" text-anchor="middle" fill="#c7c7d1" font-weight="400" >21:15</text><rect x="861" y="323" width="1" height="138" fill="rgba(240,250,255,0.09)"/><text x="861.50" y="474.30" font-size="10" text-anchor="middle" fill="#c7c7d1" font-weight="400" >21:20</text><rect x="905" y="323" width="1" height="138" fill="rgba(240,250,255,0.09)"/><text x="905.50" y="474.30" font-size="10" text-anchor="middle" fill="#c7c7d1" font-weight="400" >21:25</text><rect x="949" y="323" width="1" height="138" fill="rgba(240,250,255,0.09)"/><text x="949.50" y="474.30" font-size="10" text-anchor="middle" fill="#c7c7d1" font-weight="400" >21:30</text><rect x="994" y="323" width="1" height="138" fill="rgba(240,250,255,0.09)"/><text x="994.50" y="474.30" font-size="10" text-anchor="middle" fill="#c7c7d1" font-weight="400" >21:35</text><rect x="1038" y="323" width="1" height="138" fill="rgba(240,250,255,0.09)"/><text x="1038.50" y="474.30" font-size="10" text-anchor="middle" fill="#c7c7d1" font-weight="400" >21:40</text><rect x="1082" y="323" width="1" height="138" fill="rgba(240,250,255,0.09)"/><text x="1082.50" y="474.30" font-size="10" text-anchor="middle" fill="#c7c7d1" font-weight="400" >21:45</text><rect x="1126" y="323" width="1" height="138" fill="rgba(240,250,255,0.09)"/><text x="1126.50" y="474.30" font-size="10" text-anchor="middle" fill="#c7c7d1" font-weight="400" >21:50</text><rect x="1171" y="323" width="1" height="138" fill="rgba(240,250,255,0.09)"/><text x="1171.50" y="474.30" font-size="10" text-anchor="middle" fill="#c7c7d1" font-weight="400" >21:55</text><rect x="1215" y="323" width="1" height="138" fill="rgba(240,250,255,0.09)"/><text x="1215.50" y="474.30" font-size="10" text-anchor="middle" fill="#c7c7d1" font-weight="400" >22:00</text><path d="M728.5,450.5 L737.5,460.5 L746.5,460.5 L754.5,460.5 L763.5,460.5 L772.5,460.5 L781.5,460.5 L790.5,460.5 L799.5,460.5 L808.5,460.5 L816.5,460.5 L825.5,460.5 L834.5,460.5 L843.5,460.5 L852.5,460.5 L861.5,460.5 L870.5,460.5 L878.5,460.5 L887.5,460.5 L896.5,460.5 L905.5,460.5 L914.5,460.5 L923.5,460.5 L932.5,460.5 L940.5,460.5 L949.5,460.5 L958.5,460.5 L967.5,460.5 L976.5,460.5 L985.5,460.5 L994.5,460.5 L1002.5,413.5 L1011.5,338.5 L1020.5,372.5 L1029.5,372.5 L1038.5,377.5 L1047.5,366.5 L1056.5,374.5 L1064.5,374.5 L1073.5,370.5 L1082.5,377.5 L1091.5,382.5 L1100.5,374.5 L1109.5,366.5 L1117.5,374.5 L1126.5,366.5 L1135.5,374.5 L1144.5,366.5 L1153.5,372.5 L1162.5,377.5 L1171.5,372.5 L1179.5,362.5 L1188.5,364.5 L1197.5,374.5 L1206.5,372.5 L1215.5,424.5 L1224.5,460.5 L1233.5,460.5 L1241.5,460.5 L1250.5,460.5" fill="none" stroke="#73bf69" stroke-width="1" stroke-linejoin="round"/><circle cx="728.5" cy="450.5" r="2.0" fill="#73bf69"/><circle cx="737.5" cy="460.5" r="2.0" fill="#73bf69"/><circle cx="746.5" cy="460.5" r="2.0" fill="#73bf69"/><circle cx="754.5" cy="460.5" r="2.0" fill="#73bf69"/><circle cx="763.5" cy="460.5" r="2.0" fill="#73bf69"/><circle cx="772.5" cy="460.5" r="2.0" fill="#73bf69"/><circle cx="781.5" cy="460.5" r="2.0" fill="#73bf69"/><circle cx="790.5" cy="460.5" r="2.0" fill="#73bf69"/><circle cx="799.5" cy="460.5" r="2.0" fill="#73bf69"/><circle cx="808.5" cy="460.5" r="2.0" fill="#73bf69"/><circle cx="816.5" cy="460.5" r="2.0" fill="#73bf69"/><circle cx="825.5" cy="460.5" r="2.0" fill="#73bf69"/><circle cx="834.5" cy="460.5" r="2.0" fill="#73bf69"/><circle cx="843.5" cy="460.5" r="2.0" fill="#73bf69"/><circle cx="852.5" cy="460.5" r="2.0" fill="#73bf69"/><circle cx="861.5" cy="460.5" r="2.0" fill="#73bf69"/><circle cx="870.5" cy="460.5" r="2.0" fill="#73bf69"/><circle cx="878.5" cy="460.5" r="2.0" fill="#73bf69"/><circle cx="887.5" cy="460.5" r="2.0" fill="#73bf69"/><circle cx="896.5" cy="460.5" r="2.0" fill="#73bf69"/><circle cx="905.5" cy="460.5" r="2.0" fill="#73bf69"/><circle cx="914.5" cy="460.5" r="2.0" fill="#73bf69"/><circle cx="923.5" cy="460.5" r="2.0" fill="#73bf69"/><circle cx="932.5" cy="460.5" r="2.0" fill="#73bf69"/><circle cx="940.5" cy="460.5" r="2.0" fill="#73bf69"/><circle cx="949.5" cy="460.5" r="2.0" fill="#73bf69"/><circle cx="958.5" cy="460.5" r="2.0" fill="#73bf69"/><circle cx="967.5" cy="460.5" r="2.0" fill="#73bf69"/><circle cx="976.5" cy="460.5" r="2.0" fill="#73bf69"/><circle cx="985.5" cy="460.5" r="2.0" fill="#73bf69"/><circle cx="994.5" cy="460.5" r="2.0" fill="#73bf69"/><circle cx="1002.5" cy="413.5" r="2.0" fill="#73bf69"/><circle cx="1011.5" cy="338.5" r="2.0" fill="#73bf69"/><circle cx="1020.5" cy="372.5" r="2.0" fill="#73bf69"/><circle cx="1029.5" cy="372.5" r="2.0" fill="#73bf69"/><circle cx="1038.5" cy="377.5" r="2.0" fill="#73bf69"/><circle cx="1047.5" cy="366.5" r="2.0" fill="#73bf69"/><circle cx="1056.5" cy="374.5" r="2.0" fill="#73bf69"/><circle cx="1064.5" cy="374.5" r="2.0" fill="#73bf69"/><circle cx="1073.5" cy="370.5" r="2.0" fill="#73bf69"/><circle cx="1082.5" cy="377.5" r="2.0" fill="#73bf69"/><circle cx="1091.5" cy="382.5" r="2.0" fill="#73bf69"/><circle cx="1100.5" cy="374.5" r="2.0" fill="#73bf69"/><circle cx="1109.5" cy="366.5" r="2.0" fill="#73bf69"/><circle cx="1117.5" cy="374.5" r="2.0" fill="#73bf69"/><circle cx="1126.5" cy="366.5" r="2.0" fill="#73bf69"/><circle cx="1135.5" cy="374.5" r="2.0" fill="#73bf69"/><circle cx="1144.5" cy="366.5" r="2.0" fill="#73bf69"/><circle cx="1153.5" cy="372.5" r="2.0" fill="#73bf69"/><circle cx="1162.5" cy="377.5" r="2.0" fill="#73bf69"/><circle cx="1171.5" cy="372.5" r="2.0" fill="#73bf69"/><circle cx="1179.5" cy="362.5" r="2.0" fill="#73bf69"/><circle cx="1188.5" cy="364.5" r="2.0" fill="#73bf69"/><circle cx="1197.5" cy="374.5" r="2.0" fill="#73bf69"/><circle cx="1206.5" cy="372.5" r="2.0" fill="#73bf69"/><circle cx="1215.5" cy="424.5" r="2.0" fill="#73bf69"/><circle cx="1224.5" cy="460.5" r="2.0" fill="#73bf69"/><circle cx="1233.5" cy="460.5" r="2.0" fill="#73bf69"/><circle cx="1241.5" cy="460.5" r="2.0" fill="#73bf69"/><circle cx="1250.5" cy="460.5" r="2.0" fill="#73bf69"/><path d="M728.5,449.5 L737.5,460.5 L746.5,460.5 L754.5,460.5 L763.5,460.5 L772.5,460.5 L781.5,460.5 L790.5,460.5 L799.5,460.5 L808.5,460.5 L816.5,460.5 L825.5,460.5 L834.5,460.5 L843.5,460.5 L852.5,460.5 L861.5,460.5 L870.5,460.5 L878.5,460.5 L887.5,460.5 L896.5,460.5 L905.5,460.5 L914.5,460.5 L923.5,460.5 L932.5,460.5 L940.5,460.5 L949.5,460.5 L958.5,460.5 L967.5,460.5 L976.5,460.5 L985.5,460.5 L994.5,460.5 L1002.5,413.5 L1011.5,335.5 L1020.5,374.5 L1029.5,372.5 L1038.5,377.5 L1047.5,366.5 L1056.5,374.5 L1064.5,374.5 L1073.5,369.5 L1082.5,379.5 L1091.5,382.5 L1100.5,372.5 L1109.5,369.5 L1117.5,374.5 L1126.5,366.5 L1135.5,374.5 L1144.5,366.5 L1153.5,372.5 L1162.5,377.5 L1171.5,372.5 L1179.5,364.5 L1188.5,364.5 L1197.5,374.5 L1206.5,372.5 L1215.5,424.5 L1224.5,460.5 L1233.5,460.5 L1241.5,460.5 L1250.5,460.5" fill="none" stroke="#f2cc0c" stroke-width="1" stroke-linejoin="round"/><circle cx="728.5" cy="449.5" r="2.0" fill="#f2cc0c"/><circle cx="737.5" cy="460.5" r="2.0" fill="#f2cc0c"/><circle cx="746.5" cy="460.5" r="2.0" fill="#f2cc0c"/><circle cx="754.5" cy="460.5" r="2.0" fill="#f2cc0c"/><circle cx="763.5" cy="460.5" r="2.0" fill="#f2cc0c"/><circle cx="772.5" cy="460.5" r="2.0" fill="#f2cc0c"/><circle cx="781.5" cy="460.5" r="2.0" fill="#f2cc0c"/><circle cx="790.5" cy="460.5" r="2.0" fill="#f2cc0c"/><circle cx="799.5" cy="460.5" r="2.0" fill="#f2cc0c"/><circle cx="808.5" cy="460.5" r="2.0" fill="#f2cc0c"/><circle cx="816.5" cy="460.5" r="2.0" fill="#f2cc0c"/><circle cx="825.5" cy="460.5" r="2.0" fill="#f2cc0c"/><circle cx="834.5" cy="460.5" r="2.0" fill="#f2cc0c"/><circle cx="843.5" cy="460.5" r="2.0" fill="#f2cc0c"/><circle cx="852.5" cy="460.5" r="2.0" fill="#f2cc0c"/><circle cx="861.5" cy="460.5" r="2.0" fill="#f2cc0c"/><circle cx="870.5" cy="460.5" r="2.0" fill="#f2cc0c"/><circle cx="878.5" cy="460.5" r="2.0" fill="#f2cc0c"/><circle cx="887.5" cy="460.5" r="2.0" fill="#f2cc0c"/><circle cx="896.5" cy="460.5" r="2.0" fill="#f2cc0c"/><circle cx="905.5" cy="460.5" r="2.0" fill="#f2cc0c"/><circle cx="914.5" cy="460.5" r="2.0" fill="#f2cc0c"/><circle cx="923.5" cy="460.5" r="2.0" fill="#f2cc0c"/><circle cx="932.5" cy="460.5" r="2.0" fill="#f2cc0c"/><circle cx="940.5" cy="460.5" r="2.0" fill="#f2cc0c"/><circle cx="949.5" cy="460.5" r="2.0" fill="#f2cc0c"/><circle cx="958.5" cy="460.5" r="2.0" fill="#f2cc0c"/><circle cx="967.5" cy="460.5" r="2.0" fill="#f2cc0c"/><circle cx="976.5" cy="460.5" r="2.0" fill="#f2cc0c"/><circle cx="985.5" cy="460.5" r="2.0" fill="#f2cc0c"/><circle cx="994.5" cy="460.5" r="2.0" fill="#f2cc0c"/><circle cx="1002.5" cy="413.5" r="2.0" fill="#f2cc0c"/><circle cx="1011.5" cy="335.5" r="2.0" fill="#f2cc0c"/><circle cx="1020.5" cy="374.5" r="2.0" fill="#f2cc0c"/><circle cx="1029.5" cy="372.5" r="2.0" fill="#f2cc0c"/><circle cx="1038.5" cy="377.5" r="2.0" fill="#f2cc0c"/><circle cx="1047.5" cy="366.5" r="2.0" fill="#f2cc0c"/><circle cx="1056.5" cy="374.5" r="2.0" fill="#f2cc0c"/><circle cx="1064.5" cy="374.5" r="2.0" fill="#f2cc0c"/><circle cx="1073.5" cy="369.5" r="2.0" fill="#f2cc0c"/><circle cx="1082.5" cy="379.5" r="2.0" fill="#f2cc0c"/><circle cx="1091.5" cy="382.5" r="2.0" fill="#f2cc0c"/><circle cx="1100.5" cy="372.5" r="2.0" fill="#f2cc0c"/><circle cx="1109.5" cy="369.5" r="2.0" fill="#f2cc0c"/><circle cx="1117.5" cy="374.5" r="2.0" fill="#f2cc0c"/><circle cx="1126.5" cy="366.5" r="2.0" fill="#f2cc0c"/><circle cx="1135.5" cy="374.5" r="2.0" fill="#f2cc0c"/><circle cx="1144.5" cy="366.5" r="2.0" fill="#f2cc0c"/><circle cx="1153.5" cy="372.5" r="2.0" fill="#f2cc0c"/><circle cx="1162.5" cy="377.5" r="2.0" fill="#f2cc0c"/><circle cx="1171.5" cy="372.5" r="2.0" fill="#f2cc0c"/><circle cx="1179.5" cy="364.5" r="2.0" fill="#f2cc0c"/><circle cx="1188.5" cy="364.5" r="2.0" fill="#f2cc0c"/><circle cx="1197.5" cy="374.5" r="2.0" fill="#f2cc0c"/><circle cx="1206.5" cy="372.5" r="2.0" fill="#f2cc0c"/><circle cx="1215.5" cy="424.5" r="2.0" fill="#f2cc0c"/><circle cx="1224.5" cy="460.5" r="2.0" fill="#f2cc0c"/><circle cx="1233.5" cy="460.5" r="2.0" fill="#f2cc0c"/><circle cx="1241.5" cy="460.5" r="2.0" fill="#f2cc0c"/><circle cx="1250.5" cy="460.5" r="2.0" fill="#f2cc0c"/><rect x="76" y="273.20" width="11" height="3" rx="0.5" fill="#73bf69"/><text x="93.80" y="277.70" font-size="9.87" text-anchor="start" fill="#ccccdc" font-weight="400" clip-path="url(#clipL1)">inst-u5uzt-x9-ol88 {instancepoolid=&quot;ocid1.instancepool.oc1.ap-tokyo-1.aaaaaaaacqjyebskylghpnjjpnzbcezug3kmzju65pt3is7zr7</text><rect x="76" y="291.30" width="11" height="3" rx="0.5" fill="#f2cc0c"/><text x="93.80" y="295.80" font-size="9.87" text-anchor="start" fill="#ccccdc" font-weight="400" clip-path="url(#clipL1)">inst-echvo-x9-ol88 {instancepoolid=&quot;ocid1.instancepool.oc1.ap-tokyo-1.aaaaaaaacqjyebskylghpnjjpnzbcezug3kmzju65pt3is7zr7</text><rect x="76" y="516.50" width="11" height="3" rx="0.5" fill="#73bf69"/><text x="93.80" y="521.00" font-size="9.87" text-anchor="start" fill="#ccccdc" font-weight="400" clip-path="url(#clipL2)">inst-u5uzt-x9-ol88 {instancepoolid=&quot;ocid1.instancepool.oc1.ap-tokyo-1.aaaaaaaacqjyebskylghpnjjpnzbcezug3kmzju65pt3is7zr7</text><rect x="76" y="534.50" width="11" height="3" rx="0.5" fill="#f2cc0c"/><text x="93.80" y="539.00" font-size="9.87" text-anchor="start" fill="#ccccdc" font-weight="400" clip-path="url(#clipL2)">inst-echvo-x9-ol88 {instancepoolid=&quot;ocid1.instancepool.oc1.ap-tokyo-1.aaaaaaaacqjyebskylghpnjjpnzbcezug3kmzju65pt3is7zr7</text><rect x="684" y="242.80" width="11" height="3" rx="0.5" fill="#73bf69"/><text x="701.50" y="247.30" font-size="9.87" text-anchor="start" fill="#ccccdc" font-weight="400" clip-path="url(#clipR1)">inst-u5uzt-x9-ol88 {instancepoolid=&quot;ocid1.instancepool.oc1.ap-tokyo-1.aaaaaaaacqjyebskylghpnjjpnzbcezug3kmzju65pt3is7zr7</text><rect x="684" y="260.90" width="11" height="3" rx="0.5" fill="#f2cc0c"/><text x="701.50" y="265.40" font-size="9.87" text-anchor="start" fill="#ccccdc" font-weight="400" clip-path="url(#clipR1)">inst-echvo-x9-ol88 {instancepoolid=&quot;ocid1.instancepool.oc1.ap-tokyo-1.aaaaaaaacqjyebskylghpnjjpnzbcezug3kmzju65pt3is7zr7</text><rect x="684" y="485.90" width="11" height="3" rx="0.5" fill="#73bf69"/><text x="701.50" y="490.40" font-size="9.87" text-anchor="start" fill="#ccccdc" font-weight="400" clip-path="url(#clipR2)">inst-u5uzt-x9-ol88 {instancepoolid=&quot;ocid1.instancepool.oc1.ap-tokyo-1.aaaaaaaacqjyebskylghpnjjpnzbcezug3kmzju65pt3is7zr7</text><rect x="684" y="504.00" width="11" height="3" rx="0.5" fill="#f2cc0c"/><text x="701.50" y="508.50" font-size="9.87" text-anchor="start" fill="#ccccdc" font-weight="400" clip-path="url(#clipR2)">inst-echvo-x9-ol88 {instancepoolid=&quot;ocid1.instancepool.oc1.ap-tokyo-1.aaaaaaaacqjyebskylghpnjjpnzbcezug3kmzju65pt3is7zr7</text><text x="356.00" y="57.90" font-size="11.2" text-anchor="middle" fill="#ccccdc" font-weight="400" stroke="#ccccdc" stroke-width="0.3">CPU utilization</text><text x="356.00" y="331.20" font-size="11.2" text-anchor="middle" fill="#ccccdc" font-weight="400" stroke="#ccccdc" stroke-width="0.3">Memory utilization</text><text x="964.00" y="57.90" font-size="11.2" text-anchor="middle" fill="#ccccdc" font-weight="400" stroke="#ccccdc" stroke-width="0.3">Cluster network Tx bandwidth</text><text x="964.00" y="300.90" font-size="11.2" text-anchor="middle" fill="#ccccdc" font-weight="400" stroke="#ccccdc" stroke-width="0.3">Cluster network Rx bandwidth</text></svg>
<svg class="ov" width="1271" height="803" viewBox="0 0 1271 803" style="font-family:"Liberation Sans", sans-serif"><defs><linearGradient id="lg" x1="0" y1="0" x2="0" y2="1"><stop offset="0.1" stop-color="#f05a28"/><stop offset="0.45" stop-color="#f38421"/><stop offset="1" stop-color="#fbca0a"/></linearGradient></defs><polygon points="20.32,11.14 22.44,14.18 25.84,13.35 26.21,16.94 28.51,19.42 26.49,22.00 27.78,24.66 25.20,26.50 23.54,29.26 20.23,27.52 15.63,28.34 14.71,25.22 11.22,22.36 13.79,19.14 12.96,14.45 17.56,14.45" fill="url(#lg)" stroke="url(#lg)" stroke-width="1.3" stroke-linejoin="round"/><path d="M26.11,18.86 A4.8,4.8 0 1 0 25.28,23.59" fill="none" stroke="#181b1f" stroke-width="2.0" stroke-linecap="round"/><circle cx="21.4" cy="21.0" r="1.6" fill="#181b1f"/><path d="M21.4,22.2 L23.6,23.6" fill="none" stroke="#181b1f" stroke-width="1.1" stroke-linecap="round"/><circle cx="18.9" cy="57.8" r="6.6" fill="none" stroke="#8e8e99" stroke-width="1.4" stroke-linecap="round" stroke-linejoin="round"/><line x1="23.7" y1="62.6" x2="26.8" y2="65.8" fill="none" stroke="#8e8e99" stroke-width="1.4" stroke-linecap="round" stroke-linejoin="round"/><polygon points="19.60,90.50 22.01,94.88 26.92,95.82 23.50,99.47 24.13,104.43 19.60,102.30 15.07,104.43 15.70,99.47 12.28,95.82 17.19,94.88" fill="none" stroke="#8e8e99" stroke-width="1.4" stroke-linecap="round" stroke-linejoin="round"/><rect x="12.3" y="128.4" width="5.8" height="5.8" rx="0.8" fill="none" stroke="#ccccdc" stroke-width="1.6" stroke-linejoin="round"/><rect x="12.3" y="137.4" width="5.8" height="5.8" rx="0.8" fill="none" stroke="#ccccdc" stroke-width="1.6" stroke-linejoin="round"/><rect x="21.3" y="128.4" width="5.8" height="5.8" rx="0.8" fill="none" stroke="#ccccdc" stroke-width="1.6" stroke-linejoin="round"/><rect x="21.3" y="137.4" width="5.8" height="5.8" rx="0.8" fill="none" stroke="#ccccdc" stroke-width="1.6" stroke-linejoin="round"/><defs><linearGradient id="ab" x1="0" y1="0" x2="0" y2="1"><stop offset="0" stop-color="#fb8c2c"/><stop offset="1" stop-color="#f2612e"/></linearGradient></defs><rect x="3" y="126" width="4" height="19" rx="1" fill="url(#ab)" opacity="0.95"/><circle cx="19.7" cy="174.6" r="7.3" fill="none" stroke="#8e8e99" stroke-width="1.4" stroke-linecap="round" stroke-linejoin="round"/><path d="M16.3,178 L18.4,173.3 L23.1,171.2 L21,175.9 Z" fill="none" stroke="#8e8e99" stroke-width="1.2" stroke-linecap="round" stroke-linejoin="round"/><path d="M19.7,167.6 v1.6 M19.7,180 v1.6 M12.7,174.6 h1.6 M25.1,174.6 h1.6" fill="none" stroke="#8e8e99" stroke-width="1.2" stroke-linecap="round" stroke-linejoin="round"/><path d="M15.6,215.6 v-5.2 a4.1,4.1 0 0 1 8.2,0 v5.2" fill="none" stroke="#8e8e99" stroke-width="1.4" stroke-linecap="round" stroke-linejoin="round"/><path d="M13.6,216.4 h12.2" fill="none" stroke="#8e8e99" stroke-width="2.1" stroke-linecap="round" stroke-linejoin="round"/><path d="M19.7,204.9 v1.3 M18.2,218.6 a1.5,1.5 0 0 0 3,0" fill="none" stroke="#8e8e99" stroke-width="1.3" stroke-linecap="round" stroke-linejoin="round"/><polygon points="25.55,673.04 27.18,673.26 27.18,674.34 25.55,674.56 24.32,677.54 25.32,678.85 24.55,679.62 23.24,678.62 20.26,679.85 20.04,681.48 18.96,681.48 18.74,679.85 15.76,678.62 14.45,679.62 13.68,678.85 14.68,677.54 13.45,674.56 11.82,674.34 11.82,673.26 13.45,673.04 14.68,670.06 13.68,668.75 14.45,667.98 15.76,668.98 18.74,667.75 18.96,666.12 20.04,666.12 20.26,667.75 23.24,668.98 24.55,667.98 25.32,668.75 24.32,670.06" fill="none" stroke="#8e8e99" stroke-width="1.4" stroke-linecap="round" stroke-linejoin="round"/><circle cx="19.5" cy="673.8" r="2.4" fill="none" stroke="#8e8e99" stroke-width="1.4" stroke-linecap="round" stroke-linejoin="round"/><path d="M19.8,704.7 L25.8,706.8 V712.5 C25.8,716 22.8,718.3 19.8,719.3 C16.8,718.3 13.8,716 13.8,712.5 V706.8 Z" fill="none" stroke="#8e8e99" stroke-width="1.4" stroke-linecap="round" stroke-linejoin="round"/><clipPath id="avc"><circle cx="19.5" cy="749.9" r="9.6"/></clipPath><g clip-path="url(#avc)"><rect x="9" y="739" width="22" height="22" fill="#4d6b0c"/><rect x="11.9" y="741.9" width="2" height="1.9" fill="#f28b7f"/><rect x="25.5" y="741.9" width="2" height="1.9" fill="#f28b7f"/><rect x="15.8" y="741.9" width="1.9" height="7.8" fill="#f28b7f"/><rect x="21.6" y="741.9" width="1.9" height="7.8" fill="#f28b7f"/><rect x="15.8" y="743.8" width="7.7" height="1.9" fill="#f28b7f"/><rect x="11.9" y="750.1" width="3.9" height="6" fill="#f28b7f"/><rect x="23.5" y="750.1" width="3.9" height="6" fill="#f28b7f"/><rect x="13.8" y="756" width="1.9" height="2" fill="#f28b7f"/><rect x="23.5" y="756" width="1.9" height="2" fill="#f28b7f"/><rect x="17.7" y="752" width="3.9" height="1.9" fill="#f28b7f"/><rect x="17.7" y="755.9" width="3.9" height="1.9" fill="#f28b7f"/><rect x="15.8" y="753.9" width="1.9" height="2" fill="#f28b7f"/><rect x="21.6" y="753.9" width="1.9" height="2" fill="#f28b7f"/></g><circle cx="19.3" cy="788.7" r="7.5" fill="none" stroke="#8e8e99" stroke-width="1.4" stroke-linecap="round" stroke-linejoin="round"/><path d="M17.1,786.6 a2.2,2.2 0 1 1 3,2 c-0.7,0.3 -0.8,0.8 -0.8,1.5" fill="none" stroke="#8e8e99" stroke-width="1.3" stroke-linecap="round" stroke-linejoin="round"/><circle cx="19.3" cy="792.4" r="0.8" fill="#8e8e99"/><circle cx="41.5" cy="38.4" r="9.6" fill="#22252b" stroke="#2c2f35" stroke-width="0.8"/><path d="M39.5,34.6 L43.3,38.4 L39.5,42.2" fill="none" stroke="#d8d8e2" stroke-width="1.6" stroke-linecap="round" stroke-linejoin="round"/><rect x="56.6" y="12.3" width="4.6" height="4.4" rx="0.6" fill="none" stroke="#ccccdc" stroke-width="1.3" stroke-linejoin="round"/><rect x="56.6" y="18.1" width="4.6" height="4.4" rx="0.6" fill="none" stroke="#ccccdc" stroke-width="1.3" stroke-linejoin="round"/><rect x="63.2" y="12.3" width="4.6" height="4.4" rx="0.6" fill="none" stroke="#ccccdc" stroke-width="1.3" stroke-linejoin="round"/><rect x="63.2" y="18.1" width="4.6" height="4.4" rx="0.6" fill="none" stroke="#ccccdc" stroke-width="1.3" stroke-linejoin="round"/><polygon points="380.10,11.90 381.86,15.47 385.81,16.05 382.95,18.83 383.63,22.75 380.10,20.90 376.57,22.75 377.25,18.83 374.39,16.05 378.34,15.47" fill="none" stroke="#ccccdc" stroke-width="1.3" stroke-linejoin="round"/><circle cx="404.5" cy="17.1" r="2.1" fill="none" stroke="#ccccdc" stroke-width="1.3" stroke-linejoin="round"/><circle cx="411.7" cy="13.3" r="2.1" fill="none" stroke="#ccccdc" stroke-width="1.3" stroke-linejoin="round"/><circle cx="411.7" cy="21" r="2.1" fill="none" stroke="#ccccdc" stroke-width="1.3" stroke-linejoin="round"/><path d="M406.4,16.1 L409.8,14.3 M406.4,18.1 L409.8,20" fill="none" stroke="#ccccdc" stroke-width="1.3" stroke-linejoin="round"/><text x="76.9" y="22" font-size="14.8" fill="#ccccdc" textLength="48.2" lengthAdjust="spacingAndGlyphs">General</text><text x="132.6" y="22.4" font-size="15" fill="#ccccdc">/</text><text x="142.8" y="22" font-size="14.8" fill="#ccccdc" textLength="223.5" lengthAdjust="spacingAndGlyphs">Compute node performance metrics</text><rect x="897.8" y="15.9" width="3.0" height="6.90" fill="#8f9098"/><rect x="901.3" y="14.1" width="3.0" height="8.70" fill="#8f9098"/><rect x="904.8" y="17.7" width="3.0" height="5.10" fill="#8f9098"/><rect x="908.2" y="12" width="2.9" height="10.80" fill="#8f9098"/><path d="M913.6,13.7 V21.1 M909.9,17.4 H917.3" stroke="#111217" stroke-width="4.4"/><path d="M913.6,13.7 V21.1 M909.9,17.4 H917.3" stroke="#f5a73a" stroke-width="2.4"/><path d="M940.5,12.8 H948.2 L950.6,15.2 V22 H940.5 Z" fill="none" stroke="#9d9ea6" stroke-width="1.3" stroke-linejoin="round" stroke-linecap="round"/><path d="M943,12.8 V15.4 H946.5 V12.8 M942.8,22 V18.6 H948 V22" fill="none" stroke="#9d9ea6" stroke-width="1.3" stroke-linejoin="round" stroke-linecap="round"/><polygon points="985.96,16.59 987.18,16.77 987.18,17.63 985.96,17.81 984.97,20.20 985.71,21.20 985.10,21.81 984.10,21.07 981.71,22.06 981.53,23.28 980.67,23.28 980.49,22.06 978.10,21.07 977.10,21.81 976.49,21.20 977.23,20.20 976.24,17.81 975.02,17.63 975.02,16.77 976.24,16.59 977.23,14.20 976.49,13.20 977.10,12.59 978.10,13.33 980.49,12.34 980.67,11.12 981.53,11.12 981.71,12.34 984.10,13.33 985.10,12.59 985.71,13.20 984.97,14.20" fill="none" stroke="#9d9ea6" stroke-width="1.3" stroke-linejoin="round" stroke-linecap="round"/><circle cx="981.1" cy="17.2" r="1.9" fill="none" stroke="#9d9ea6" stroke-width="1.3" stroke-linejoin="round" stroke-linecap="round"/><circle cx="1016" cy="17.2" r="5.8" fill="none" stroke="#9d9ea6" stroke-width="1.3" stroke-linejoin="round" stroke-linecap="round"/><path d="M1016,14 V17.2 H1013.8" fill="none" stroke="#9d9ea6" stroke-width="1.3" stroke-linejoin="round" stroke-linecap="round"/><text x="1030.4" y="21" font-size="11.6" fill="#9d9ea6" stroke="#9d9ea6" stroke-width="0.3" textLength="57.3" lengthAdjust="spacingAndGlyphs">Last 1 hour</text><path d="M1100,15.8 L1102.6,18.4 L1105.2,15.8" fill="none" stroke="#9d9ea6" stroke-width="1.3" stroke-linejoin="round" stroke-linecap="round"/><line x1="1115.5" y1="5.5" x2="1115.5" y2="29.5" stroke="#26282d" stroke-width="1"/><circle cx="1129.5" cy="16.4" r="5.2" fill="none" stroke="#9d9ea6" stroke-width="1.3" stroke-linejoin="round" stroke-linecap="round"/><path d="M1133.3,20.2 L1136,22.9 M1127,16.4 H1132" fill="none" stroke="#9d9ea6" stroke-width="1.3" stroke-linejoin="round" stroke-linecap="round"/><path d="M1170.4,17.8 A5.5,5.5 0 0 0 1160.9,13.3 M1159.8,17 A5.5,5.5 0 0 0 1169.3,21.5" fill="none" stroke="#9d9ea6" stroke-width="1.3" stroke-linejoin="round" stroke-linecap="round"/><path d="M1160.4,10.9 V13.6 H1163.2 M1169.8,23.9 V21.2 H1167" fill="none" stroke="#9d9ea6" stroke-width="1.3" stroke-linejoin="round" stroke-linecap="round"/><line x1="1179.5" y1="5.5" x2="1179.5" y2="29.5" stroke="#26282d" stroke-width="1"/><text x="1186.6" y="21" font-size="11.6" fill="#9d9ea6" stroke="#9d9ea6" stroke-width="0.3" textLength="18.4" lengthAdjust="spacingAndGlyphs">10s</text><path d="M1211.6,16 L1214.3,18.7 L1217,16" fill="none" stroke="#9d9ea6" stroke-width="1.3" stroke-linejoin="round" stroke-linecap="round"/><rect x="1243.4" y="11.6" width="11.6" height="8.6" rx="1.5" fill="none" stroke="#9d9ea6" stroke-width="1.3" stroke-linejoin="round" stroke-linecap="round"/><path d="M1244,17.8 H1254.4" stroke="#9d9ea6" stroke-width="2.4"/><path d="M1246.8,20.5 V22.5 H1251.6 V20.5" fill="none" stroke="#9d9ea6" stroke-width="1.3" stroke-linejoin="round" stroke-linecap="round"/></svg>
</body></html>
